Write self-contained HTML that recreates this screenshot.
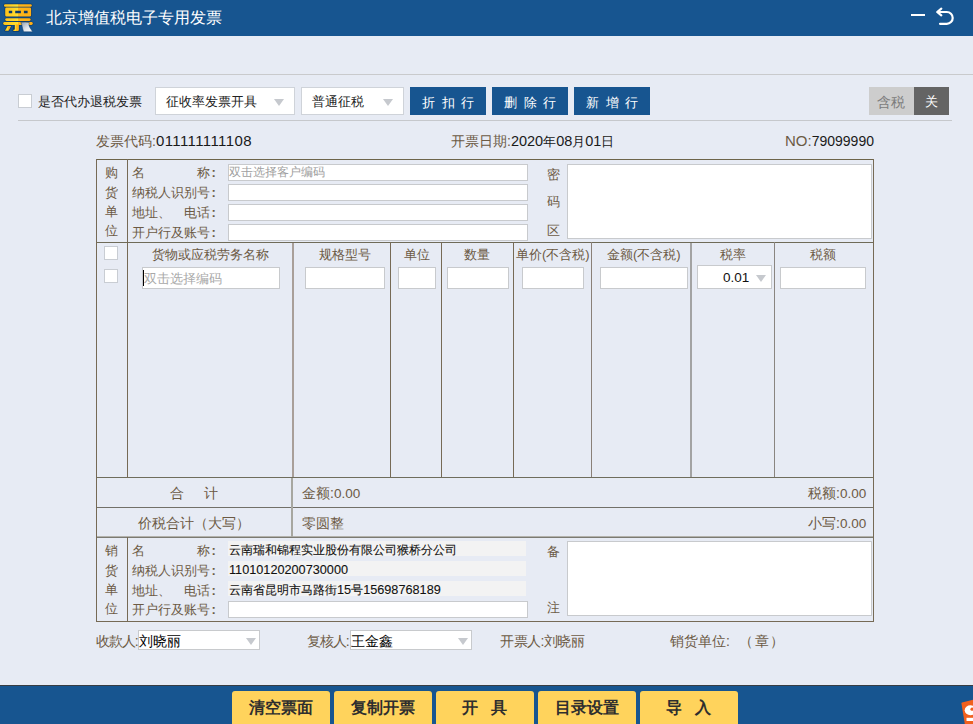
<!DOCTYPE html>
<html><head><meta charset="utf-8">
<style>
*{margin:0;padding:0;box-sizing:border-box}
html,body{width:973px;height:724px;overflow:hidden;background:#e7ebf4;font-family:"Liberation Sans",sans-serif;font-size:13px;color:#222}
.a{position:absolute}
.t{position:absolute;white-space:nowrap;line-height:1}
.hl{position:absolute;height:1px;background:#c6c8cc}
.box{position:absolute;background:#fff;border:1px solid #c9cdd3}
.dd{position:absolute;background:#fff;border:1px solid #cfd3d9}
.arr{position:absolute;width:0;height:0;border-left:5px solid transparent;border-right:5px solid transparent;border-top:7px solid #c6c9ce}
.btn{position:absolute;top:87px;width:76px;height:28px;background:#175590;color:#fff;font-size:13px;line-height:32px;padding-left:12px;letter-spacing:6.5px}
.L{position:absolute;background:#766a55}
.lab{position:absolute;white-space:nowrap;line-height:1;color:#6c5a44;font-size:13px}
.val{color:#1a1a1a}
.bd{-webkit-text-stroke:0.1px currentColor}
.c{margin-left:1.5px;font-weight:bold}
.inp{position:absolute;background:#fff;border:1px solid #c8cacd}
.fld{position:absolute;background:#f3f3f3}
.ybtn{position:absolute;top:691px;width:98px;height:33px;background:#ffd35c;border-radius:3px 3px 0 0;color:#2e2e2e;font-size:16px;font-weight:bold;line-height:1}
.ybtn span{position:absolute;top:9px;white-space:nowrap}
</style></head><body>
<!-- title bar -->
<div class="a" style="left:0;top:0;width:973px;height:36px;background:#175590"></div>
<svg class="a" style="left:0;top:0" width="40" height="36" viewBox="0 0 40 36">
<defs><linearGradient id="lg" x1="0" x2="1" y1="0" y2="0"><stop offset="0" stop-color="#ffc21a"/><stop offset="0.4" stop-color="#ffd92c"/><stop offset="0.49" stop-color="#ffe030"/><stop offset="0.5" stop-color="#ffb81a"/><stop offset="1" stop-color="#ffae14"/></linearGradient>
<linearGradient id="pg" x1="0" x2="1" y1="0" y2="1"><stop offset="0" stop-color="#8f9cab"/><stop offset="0.55" stop-color="#dfe4ea"/><stop offset="1" stop-color="#ffffff"/></linearGradient></defs>
<g fill="#0d3a6a" stroke="#0d3a6a" stroke-width="1.4" stroke-linejoin="round">
<rect x="4" y="4.2" width="27.8" height="2.5" rx="1.2"/><rect x="5.2" y="7.5" width="25.9" height="8.9" rx="1.2"/><rect x="5.2" y="18.2" width="25.5" height="2.7" rx="1.3"/><rect x="3.2" y="22.1" width="29.6" height="2.8" rx="1.4"/><path d="M14.5 24.5 H18.9 V31 H13.2 Z"/><path d="M7.6 26 L11.2 26 L8.6 30.8 L5 30.8 Z"/>
</g>
<g fill="url(#lg)">
<rect x="4" y="4.2" width="27.8" height="2.5" rx="1.2"/>
<path d="M6.4 7.5 H29.9 A1.2 1.2 0 0 1 31.1 8.7 V15.2 A1.2 1.2 0 0 1 29.9 16.4 H6.4 A1.2 1.2 0 0 1 5.2 15.2 V8.7 A1.2 1.2 0 0 1 6.4 7.5 Z M8.8 10.7 V13.2 H12.2 V10.7 Z M15.2 10.7 V13.2 H20.9 V10.7 Z M23.9 10.7 V13.2 H27.6 V10.7 Z" fill-rule="evenodd"/>
<rect x="5.2" y="18.2" width="25.5" height="2.7" rx="1.3"/>
<rect x="3.2" y="22.1" width="29.6" height="2.8" rx="1.4"/>
<path d="M14.8 24.5 H18.9 V29.8 Q18.9 31 17.6 31 H13.2 Q13.2 29.6 14.8 29.6 Z"/>
<path d="M7.6 26 L11.2 26 L8.6 30.8 L5 30.8 Z"/>
</g>
<path d="M20.8 22.3 Q25 21.6 29.3 22.6 Q28.4 24.6 29.6 27 L32.6 31.8 L23.6 31.8 Q22.6 28.8 22.1 26.2 Q21.8 23.8 20.8 22.3 Z" fill="url(#pg)" stroke="#0d3a6a" stroke-width="0.5"/>
</svg>
<div class="t" style="left:46px;top:10px;font-size:16px;color:#fff">北京增值税电子专用发票</div>
<div class="a" style="left:911px;top:14px;width:14px;height:2px;background:#fff"></div>
<svg class="a" style="left:930px;top:4px" width="30" height="26" viewBox="930 4 30 26">
<path d="M938 12 H946.8 A5.9 5.9 0 0 1 946.8 23.8 H940" fill="none" stroke="#fff" stroke-width="2.2" stroke-linecap="round"/>
<path d="M941.3 8.6 L937.2 12 L941.3 15.4" fill="none" stroke="#fff" stroke-width="2.2" stroke-linecap="round" stroke-linejoin="round"/>
</svg>

<div class="hl" style="left:0;top:74px;width:973px;background:#c9cacc"></div>

<!-- toolbar -->
<div class="box" style="left:18px;top:94px;width:14px;height:14px"></div>
<div class="t" style="left:38px;top:95px">是否代办退税发票</div>
<div class="dd" style="left:155px;top:87px;width:140px;height:28px"></div>
<div class="t" style="left:166px;top:95px">征收率发票开具</div>
<div class="arr" style="left:274px;top:99px"></div>
<div class="dd" style="left:301px;top:87px;width:103px;height:28px"></div>
<div class="t" style="left:312px;top:95px">普通征税</div>
<div class="arr" style="left:383px;top:99px"></div>
<div class="btn" style="left:410px">折扣行</div>
<div class="btn" style="left:492px">删除行</div>
<div class="btn" style="left:574px">新增行</div>
<div class="a" style="left:869px;top:87px;width:45px;height:28px;background:#cdcdcd;color:#7c7c7c;font-size:14px;line-height:30px;text-align:center;text-indent:-1px">含税</div>
<div class="a" style="left:914px;top:87px;width:35px;height:28px;background:#646464;color:#fff;font-size:13px;line-height:30px;text-align:center">关</div>
<div class="hl" style="left:18px;top:120px;width:934px"></div>

<!-- header -->
<div class="lab" style="left:96px;top:133px;font-size:14px">发票代码:<span class="val" style="font-size:15px;letter-spacing:0.4px">011111111108</span></div>
<div class="lab" style="left:451px;top:134px;font-size:14px">开票日期:<span class="val" style="font-size:14.5px">2020<span style="font-size:13px">年</span>08<span style="font-size:13px">月</span>01<span style="font-size:13px">日</span></span></div>
<div class="lab" style="left:785px;top:133px;font-size:15px">NO:<span class="val" style="font-size:14px">79099990</span></div>

<!-- table lines -->
<div class="L" style="left:96px;top:159px;width:778px;height:1px;background:#6d6449"></div>
<div class="L" style="left:96px;top:242px;width:778px;height:1px;background:#6f6b58"></div>
<div class="L" style="left:96px;top:477px;width:778px;height:1px;background:#6f6d5c"></div>
<div class="L" style="left:96px;top:507px;width:778px;height:1px;background:#727068"></div>
<div class="L" style="left:96px;top:536px;width:778px;height:1px;background:#b3b2ac"></div><div class="L" style="left:96px;top:537px;width:778px;height:1px;background:#7b7a72"></div>
<div class="L" style="left:96px;top:621px;width:778px;height:1px"></div>
<div class="L" style="left:96px;top:159px;width:1px;height:463px"></div>
<div class="L" style="left:873px;top:159px;width:1px;height:463px"></div>
<div class="L" style="left:127px;top:159px;width:1px;height:319px"></div>
<div class="L" style="left:127px;top:537px;width:1px;height:84px"></div>
<div class="L" style="left:292px;top:243px;width:2px;height:234px;background:#a99f99"></div>
<div class="L" style="left:291px;top:478px;width:2px;height:59px;background:#a7a7a0"></div>
<div class="L" style="left:390px;top:242px;width:1px;height:235px"></div>
<div class="L" style="left:441px;top:242px;width:1px;height:235px"></div>
<div class="L" style="left:513px;top:242px;width:1px;height:235px"></div>
<div class="L" style="left:591px;top:242px;width:1px;height:235px;background:#8a8078"></div>
<div class="L" style="left:690px;top:243px;width:2px;height:234px;background:#a3a3a3"></div>
<div class="L" style="left:774px;top:242px;width:1px;height:235px;background:#8a8580"></div>

<!-- buyer -->
<div class="lab" style="left:105px;top:166px">购</div>
<div class="lab" style="left:105px;top:186px">货</div>
<div class="lab" style="left:105px;top:205px">单</div>
<div class="lab" style="left:105px;top:224px">位</div>
<div class="lab" style="left:132px;top:166px">名</div>
<div class="lab" style="left:197px;top:166px">称<span class="c">:</span></div>
<div class="lab" style="left:132px;top:186px">纳税人识别号<span class="c">:</span></div>
<div class="lab" style="left:132px;top:206px">地址、</div>
<div class="lab" style="left:184px;top:206px">电话<span class="c">:</span></div>
<div class="lab" style="left:132px;top:226px">开户行及账号<span class="c">:</span></div>
<div class="inp" style="left:228px;top:164px;width:300px;height:17px"></div>
<div class="t" style="left:229px;top:166px;font-size:12px;color:#a0a0a0">双击选择客户编码</div>
<div class="inp" style="left:228px;top:184px;width:300px;height:17px"></div>
<div class="inp" style="left:228px;top:204px;width:300px;height:17px"></div>
<div class="inp" style="left:228px;top:224px;width:300px;height:17px"></div>
<div class="lab" style="left:547px;top:168px">密</div>
<div class="lab" style="left:547px;top:195px">码</div>
<div class="lab" style="left:547px;top:224px">区</div>
<div class="inp" style="left:567px;top:164px;width:305px;height:75px"></div>

<!-- goods -->
<div class="box" style="left:104px;top:246px;width:14px;height:14px"></div>
<div class="box" style="left:104px;top:269px;width:14px;height:14px"></div>
<div class="lab" style="left:152px;top:248px">货物或应税劳务名称</div>
<div class="lab" style="left:319px;top:248px">规格型号</div>
<div class="lab" style="left:404px;top:248px">单位</div>
<div class="lab" style="left:464px;top:248px">数量</div>
<div class="lab" style="left:516px;top:248px">单价(不含税)</div>
<div class="lab" style="left:607px;top:248px">金额(不含税)</div>
<div class="lab" style="left:720px;top:248px">税率</div>
<div class="lab" style="left:810px;top:248px">税额</div>
<div class="inp" style="left:142px;top:267px;width:138px;height:22px"></div>
<div class="a" style="left:143px;top:270px;width:1px;height:16px;background:#000"></div>
<div class="t" style="left:144px;top:272px;color:#a8a8a8">双击选择编码</div>
<div class="inp" style="left:305px;top:267px;width:80px;height:22px"></div>
<div class="inp" style="left:398px;top:267px;width:38px;height:22px"></div>
<div class="inp" style="left:447px;top:267px;width:62px;height:22px"></div>
<div class="inp" style="left:522px;top:267px;width:62px;height:22px"></div>
<div class="inp" style="left:600px;top:267px;width:88px;height:22px"></div>
<div class="inp" style="left:697px;top:265px;width:75px;height:24px"></div>
<div class="t" style="left:723px;top:271px;font-size:13.5px;color:#111">0.01</div>
<div class="arr" style="left:756px;top:275px"></div>
<div class="inp" style="left:780px;top:267px;width:86px;height:22px"></div>

<!-- totals -->
<div class="lab" style="left:170px;top:486px;font-size:14px">合</div>
<div class="lab" style="left:204px;top:486px;font-size:14px">计</div>
<div class="lab" style="left:302px;top:486px;font-size:14px">金额:<span style="font-size:13.5px">0.00</span></div>
<div class="lab" style="left:808px;top:486px;font-size:14px">税额:<span style="font-size:13.5px">0.00</span></div>
<div class="lab" style="left:138px;top:516px;font-size:14px">价税合计（大写）</div>
<div class="lab" style="left:302px;top:516px;font-size:14px">零圆整</div>
<div class="lab" style="left:808px;top:516px;font-size:14px">小写:<span style="font-size:13.5px">0.00</span></div>

<!-- seller -->
<div class="lab" style="left:105px;top:544px">销</div>
<div class="lab" style="left:105px;top:564px">货</div>
<div class="lab" style="left:105px;top:583px">单</div>
<div class="lab" style="left:105px;top:602px">位</div>
<div class="lab" style="left:132px;top:544px">名</div>
<div class="lab" style="left:197px;top:544px">称<span class="c">:</span></div>
<div class="lab" style="left:132px;top:564px">纳税人识别号<span class="c">:</span></div>
<div class="lab" style="left:132px;top:584px">地址、</div>
<div class="lab" style="left:184px;top:584px">电话<span class="c">:</span></div>
<div class="lab" style="left:132px;top:603px">开户行及账号<span class="c">:</span></div>
<div class="fld" style="left:228px;top:541px;width:298px;height:15px"></div>
<div class="fld" style="left:228px;top:561px;width:298px;height:15px"></div>
<div class="fld" style="left:228px;top:581px;width:298px;height:15px"></div>
<div class="inp" style="left:228px;top:601px;width:300px;height:17px"></div>
<div class="t bd" style="left:229px;top:544px;color:#111;font-size:12px">云南瑞和锦程实业股份有限公司猴桥分公司</div>
<div class="t bd" style="left:229px;top:564px;color:#111;font-size:12.7px">11010120200730000</div>
<div class="t bd" style="left:229px;top:584px;color:#111;font-size:12px">云南省昆明市马路街<span style="font-size:12.7px">15</span>号<span style="font-size:12.7px">15698768189</span></div>
<div class="lab" style="left:547px;top:545px">备</div>
<div class="lab" style="left:547px;top:601px">注</div>
<div class="inp" style="left:567px;top:541px;width:305px;height:75px"></div>

<!-- bottom row -->
<div class="lab" style="left:96px;top:634px;font-size:14px;letter-spacing:-1.1px;z-index:2">收款人:</div>
<div class="inp" style="left:138px;top:630px;width:122px;height:20px"></div>
<div class="t" style="left:139px;top:634px;font-size:14px;color:#000">刘晓丽</div>
<div class="arr" style="left:246px;top:638px"></div>
<div class="lab" style="left:307px;top:634px;font-size:14px;letter-spacing:-1.1px;z-index:2">复核人:</div>
<div class="inp" style="left:350px;top:630px;width:122px;height:20px"></div>
<div class="t" style="left:351px;top:634px;font-size:14px;color:#000">王金鑫</div>
<div class="arr" style="left:458px;top:638px"></div>
<div class="lab" style="left:500px;top:634px;font-size:14px;letter-spacing:-0.5px">开票人:刘晓丽</div>
<div class="lab" style="left:670px;top:634px;font-size:14px">销货单位:</div><div class="lab" style="left:739px;top:634px;font-size:14px;letter-spacing:1.5px">（章）</div>

<!-- footer -->
<div class="a" style="left:0;top:685px;width:973px;height:39px;background:#175590;border-top:1px solid #383c42"></div>
<div class="ybtn" style="left:232px"><span style="left:17px">清空票面</span></div>
<div class="ybtn" style="left:334px"><span style="left:17px">复制开票</span></div>
<div class="ybtn" style="left:436px"><span style="left:26px;letter-spacing:1.4px">开&nbsp;&nbsp;具</span></div>
<div class="ybtn" style="left:538px"><span style="left:17px">目录设置</span></div>
<div class="ybtn" style="left:640px"><span style="left:26px;letter-spacing:1.4px">导&nbsp;&nbsp;入</span></div>
<svg class="a" style="left:955px;top:696px" width="18" height="28" viewBox="0 0 18 28">
<path d="M6.5 7.8 Q6 7 7 6.6 L18 3.8 L18 28 L9.8 28 Z" fill="#f0601e"/>
<ellipse cx="15.5" cy="14.3" rx="5.8" ry="5" fill="#fff"/>
<circle cx="17" cy="13.2" r="1.6" fill="#f0601e"/>
<rect x="11.5" y="21.8" width="7" height="3.2" fill="#fff"/>
</svg>
</body></html>
